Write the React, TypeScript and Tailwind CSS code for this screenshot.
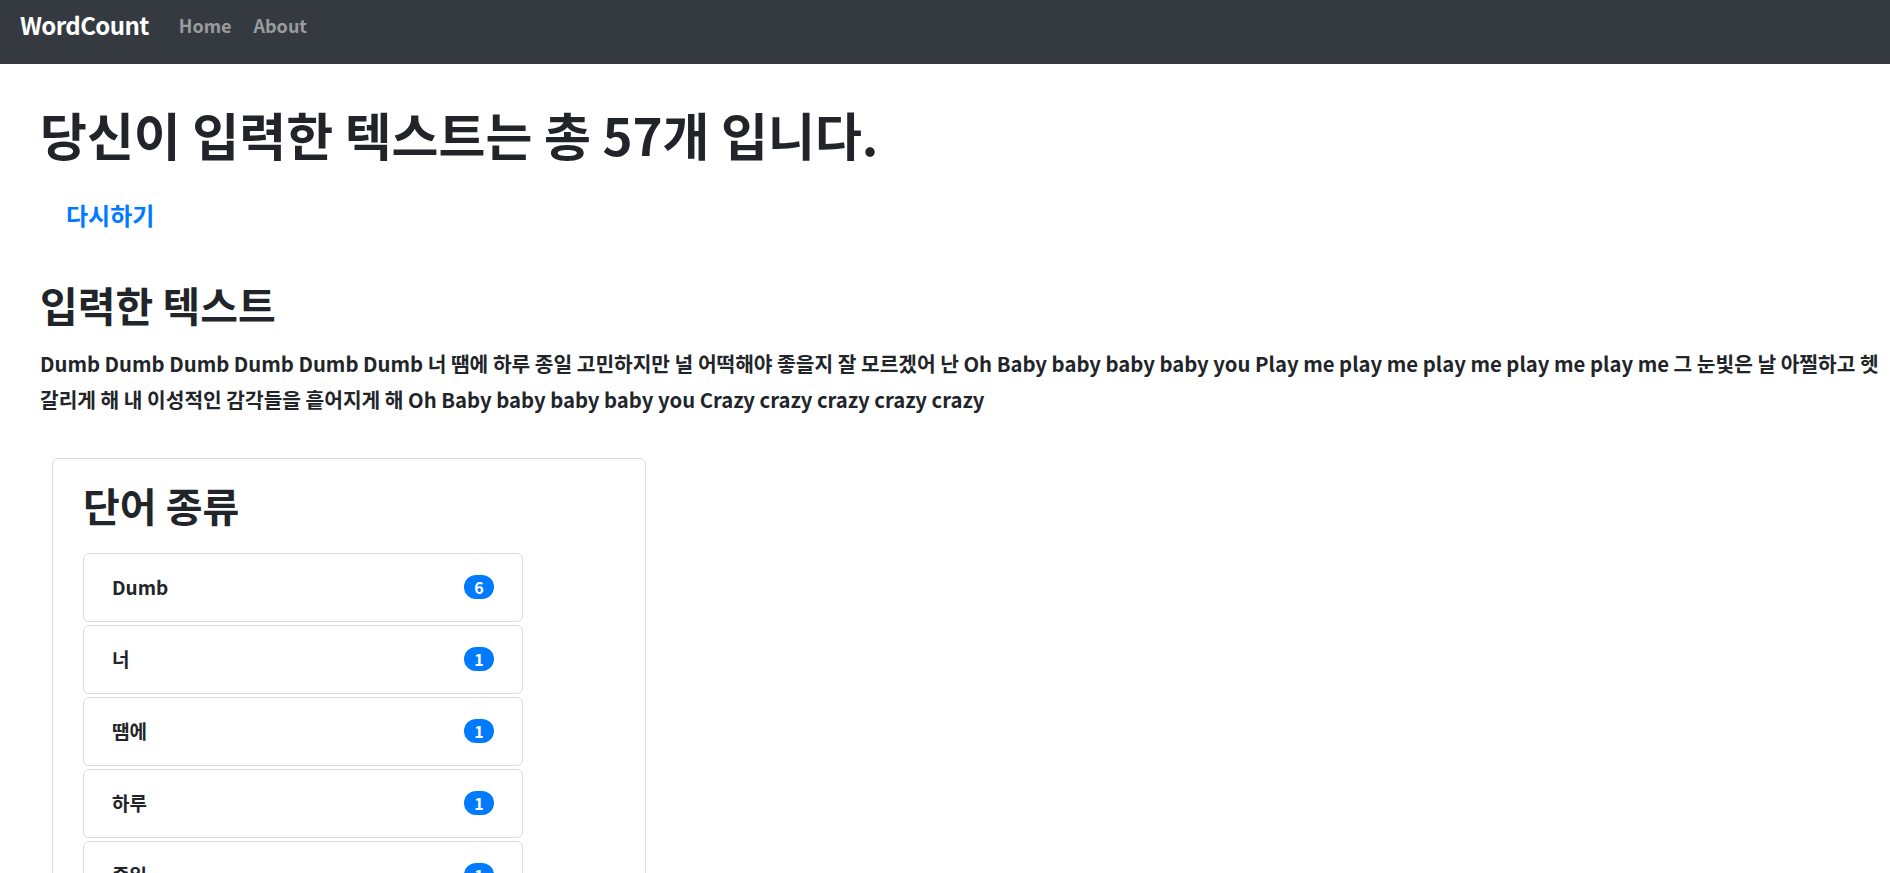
import React from "react";

const TEXT =
  "Dumb Dumb Dumb Dumb Dumb Dumb 너 땜에 하루 종일 고민하지만 널 어떡해야 좋을지 잘 모르겠어 난 Oh Baby baby baby baby you Play me play me play me play me play me 그 눈빛은 날 아찔하고 헷갈리게 해 내 이성적인 감각들을 흩어지게 해 Oh Baby baby baby baby you Crazy crazy crazy crazy crazy";

const countWords = (text: string) => {
  const counts: { word: string; count: number }[] = [];
  text.split(" ").forEach((w) => {
    const found = counts.find((c) => c.word === w);
    if (found) found.count += 1;
    else counts.push({ word: w, count: 1 });
  });
  return counts;
};

const App = () => {
  const words = countWords(TEXT);

  return (
    <div
      className="min-h-screen bg-white text-[#212529]"
      style={{ fontFamily: '"Noto Sans CJK KR", "Noto Sans", sans-serif' }}
    >
      <nav className="h-16 bg-[#343a40] flex items-start pt-[7px] px-5 leading-[36px]">
        <a className="text-white text-[24px] font-bold mr-[30px] tracking-tight">WordCount</a>
        <a className="text-white/50 text-[18px] font-bold mr-[22px]">Home</a>
        <a className="text-white/50 text-[18px] font-bold">About</a>
      </nav>

      <main className="px-10 pt-[40px]">
        <h1 className="text-[51px] font-bold leading-[1.2]">
          당신이 입력한 텍스트는 총 57개 입니다.
        </h1>
        <button className="mt-[34px] ml-[26px] text-[24px] font-bold text-[#007bff] leading-[1.3]">
          다시하기
        </button>

        <h2 className="mt-[50px] text-[41px] font-bold leading-[1.2]">입력한 텍스트</h2>
        <p className="mt-[15px] text-[20.3px] font-bold leading-[36px] -mr-8">{TEXT}</p>

        <div className="mt-[41px] ml-3 w-[594px] border border-[#dcdcdc] rounded-md px-[30px] pt-[22px]">
          <h3 className="text-[40px] font-bold leading-[1.2] mb-[24px]">단어 종류</h3>
          <ul className="w-[440px] flex flex-col gap-[3px]">
            {words.map((w) => (
              <li
                key={w.word}
                className="h-[69px] border border-[#dcdcdc] rounded-md px-[28px] flex items-center justify-between text-[19px] font-bold"
              >
                <span>{w.word}</span>
                <span className="min-w-[30px] h-[24px] px-2 rounded-full bg-[#007bff] text-white text-[16px] font-bold flex items-center justify-center">
                  {w.count}
                </span>
              </li>
            ))}
          </ul>
        </div>
      </main>
    </div>
  );
};

export default App;
